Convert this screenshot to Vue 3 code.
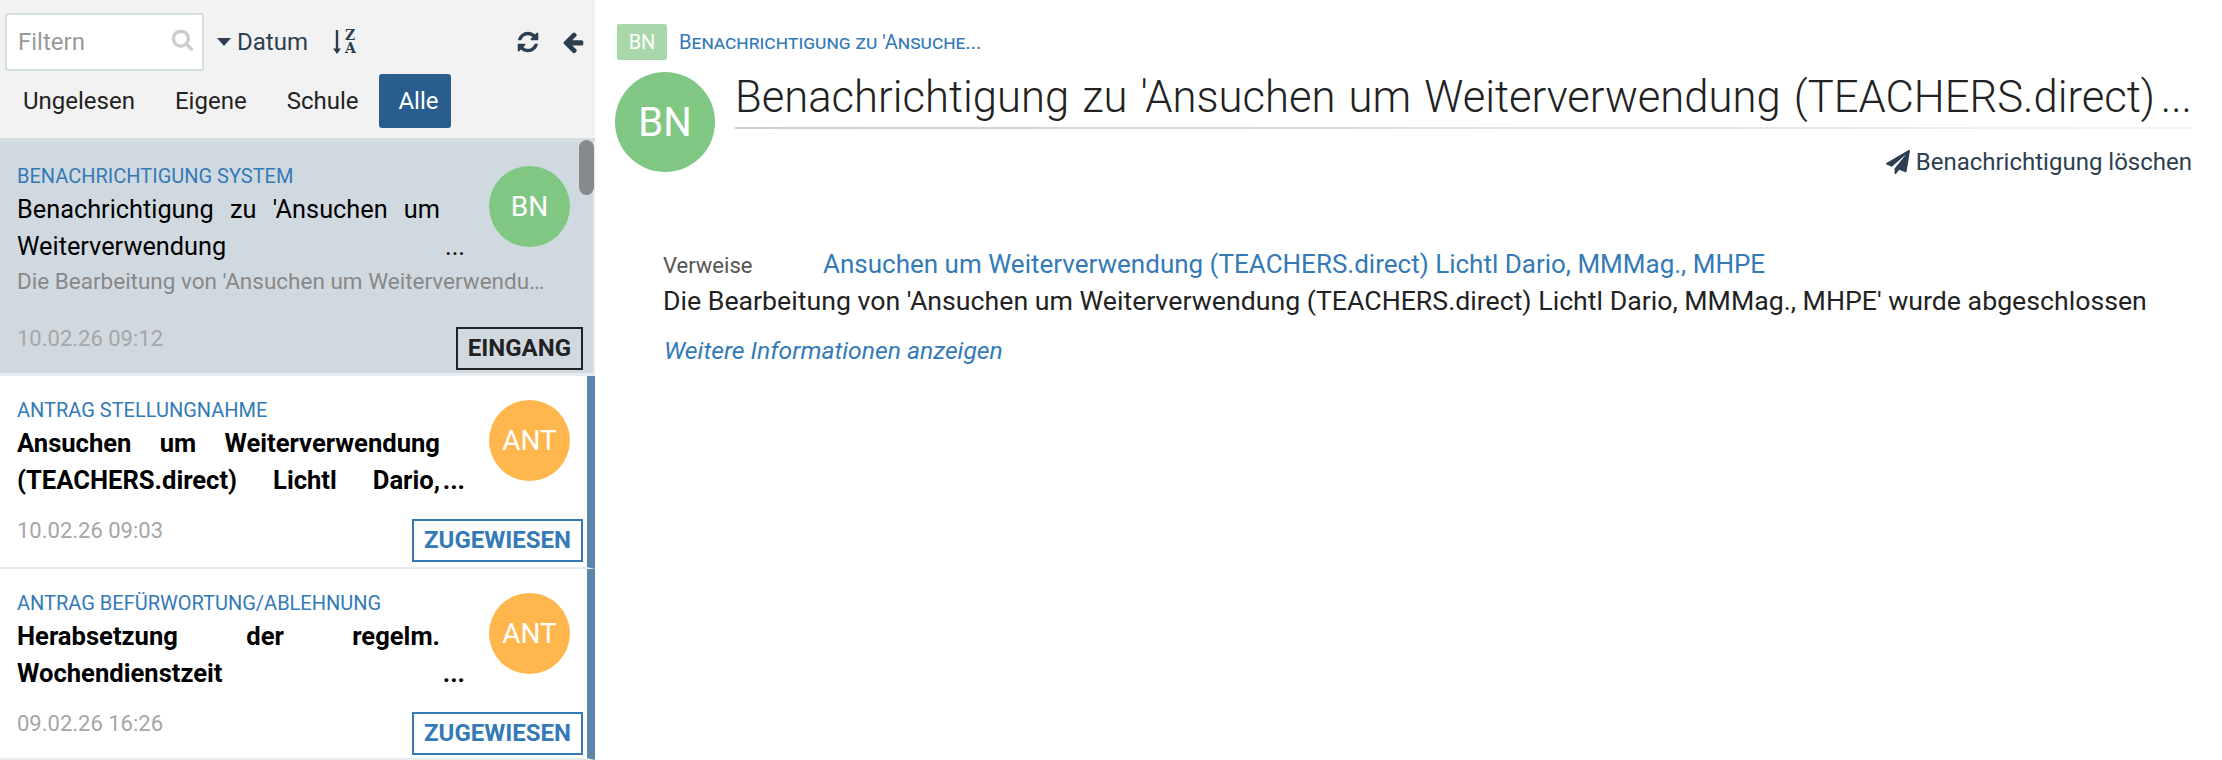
<template>
  <div class="page">
    <aside class="sidebar">
      <div class="toolbar">
        <div class="filter">
          <input class="filter-input" type="text" placeholder="Filtern" />
          <svg class="filter-icon" viewBox="0 0 1792 1792"><path :d="icons.search" /></svg>
        </div>
        <span class="caret"></span>
        <span class="sort-label">Datum</span>
        <div class="sort-icon">
          <svg class="sort-arrow" viewBox="0 0 8 24"><path d="M2.800 0h2.400v18.500h2.800l-4 5.500-4-5.500h2.800z" /></svg>
          <div class="sort-letters"><span>Z</span><span>A</span></div>
        </div>
        <svg class="tool-icon refresh" viewBox="0 0 1792 1792"><path :d="icons.refresh" /></svg>
        <svg class="tool-icon back" viewBox="0 0 1792 1792"><path :d="icons.back" /></svg>
      </div>
      <div class="tabs">
        <button v-for="tab in tabs" :key="tab" class="tab" :class="{ active: tab === 'Alle' }">{{ tab }}</button>
      </div>
      <div class="list">
        <div class="scrollbar"></div>
        <div v-for="item in items" :key="item.date" class="card" :class="{ selected: item.selected, assigned: !item.selected }">
          <div class="card-main">
            <div class="card-text">
              <div class="card-type">{{ item.type }}</div>
              <div class="card-title">{{ item.title }}</div>
              <div v-if="item.preview" class="card-preview">{{ item.preview }}</div>
            </div>
            <div class="avatar" :class="item.color">{{ item.initials }}</div>
          </div>
          <div class="card-foot">
            <span class="card-date">{{ item.date }}</span>
            <span class="card-status">{{ item.status }}</span>
          </div>
        </div>
      </div>
    </aside>

    <main class="detail">
      <div class="crumb">
        <span class="crumb-badge">BN</span>
        <span class="crumb-text">Benachrichtigung zu 'Ansuche...</span>
      </div>
      <div class="head">
        <div class="head-avatar">BN</div>
        <div class="head-main">
          <div class="head-rule">
            <h1 class="head-title">Benachrichtigung zu 'Ansuchen um Weiterverwendung (TEACHERS.direct) Lichtl Dario, MMMag., MHPE'</h1>
          </div>
          <div class="head-actions">
            <svg class="plane" viewBox="0 0 1792 1792"><path :d="icons.plane" /></svg>
            <span>Benachrichtigung löschen</span>
          </div>
        </div>
      </div>
      <div class="content">
        <div class="refs">
          <span class="refs-label">Verweise</span>
          <a class="refs-link">Ansuchen um Weiterverwendung (TEACHERS.direct) Lichtl Dario, MMMag., MHPE</a>
        </div>
        <p class="message">Die Bearbeitung von 'Ansuchen um Weiterverwendung (TEACHERS.direct) Lichtl Dario, MMMag., MHPE' wurde abgeschlossen</p>
        <a class="more">Weitere Informationen anzeigen</a>
      </div>
    </main>
  </div>
</template>

<script setup>
const tabs = ['Ungelesen', 'Eigene', 'Schule', 'Alle'];

const items = [
  {
    type: 'Benachrichtigung System',
    title: "Benachrichtigung zu 'Ansuchen um Weiterverwendung (TEACHERS.direct) Lichtl Dario, MMMag., MHPE'",
    preview: "Die Bearbeitung von 'Ansuchen um Weiterverwendung (TEACHERS.direct) Lichtl Dario, MMMag., MHPE' wurde abgeschlossen",
    date: '10.02.26 09:12',
    status: 'Eingang',
    initials: 'BN',
    color: 'green',
    selected: true
  },
  {
    type: 'Antrag Stellungnahme',
    title: 'Ansuchen um Weiterverwendung (TEACHERS.direct) Lichtl Dario, MMMag., MHPE',
    date: '10.02.26 09:03',
    status: 'Zugewiesen',
    initials: 'ANT',
    color: 'orange'
  },
  {
    type: 'Antrag Befürwortung/Ablehnung',
    title: 'Herabsetzung der regelm. Wochendienstzeit (TEACHERS.direct) Lichtl Dario, MMMag., MHPE',
    date: '09.02.26 16:26',
    status: 'Zugewiesen',
    initials: 'ANT',
    color: 'orange'
  }
];

const icons = {
  search: 'M1216 832q0-185-131.500-316.500t-316.500-131.500-316.500 131.500-131.500 316.500 131.500 316.500 316.500 131.500 316.500-131.500 131.500-316.500zm512 832q0 52-38 90t-90 38q-54 0-90-38l-343-342q-179 124-399 124-143 0-273.500-55.500t-225-150-150-225-55.500-273.500 55.500-273.500 150-225 225-150 273.500-55.500 273.500 55.500 225 150 150 225 55.500 273.500q0 220-124 399l343 343q37 37 37 90z',
  refresh: 'M1639 1056q0 5-1 7-64 268-268 434.500t-478 166.500q-146 0-282.500-55t-243.500-157l-129 129q-19 19-45 19t-45-19-19-45v-448q0-26 19-45t45-19h448q26 0 45 19t19 45-19 45l-137 137q71 66 161 102t187 36q134 0 250-65t186-179q11-17 53-117 8-23 30-23h192q13 0 22.500 9.500t9.500 22.500zm25-800v448q0 26-19 45t-45 19h-448q-26 0-45-19t-19-45 19-45l138-138q-148-137-349-137-134 0-250 65t-186 179q-11 17-53 117-8 23-30 23h-199q-13 0-22.500-9.500t-9.500-22.500v-7q65-268 270-434.500t480-166.500q146 0 284 55.500t245 156.500l130-129q19-19 45-19t45 19 19 45z',
  back: 'M1664 896v128q0 53-32.500 90.500t-84.500 37.500h-704l293 294q38 36 38 90t-38 90l-75 76q-37 37-90 37-52 0-91-37l-651-652q-37-37-37-90 0-52 37-91l651-650q38-38 91-38 52 0 90 38l75 74q38 38 38 91t-38 91l-293 293h704q52 0 84.500 37.500t32.500 90.500z',
  plane: 'M1764 11q33 24 27 64l-256 1536q-5 29-32 45-14 8-31 8-11 0-24-5l-453-185-242 295q-18 23-49 23-13 0-22-4-19-7-30.500-23.500t-11.500-36.500v-349l864-1059-1069 925-395-162q-37-14-40-55-2-40 32-59l1664-960q15-9 32-9 20 0 36 11z'
};
</script>

<style scoped>
.page {
  display: flex;
  width: 2222px;
  height: 760px;
  overflow: hidden;
  font-family: Roboto, "Liberation Sans", sans-serif;
  background: #fff;
}

.sidebar {
  width: 595px;
  height: 760px;
  flex-shrink: 0;
  display: flex;
  flex-direction: column;
  background: #f2f2f2;
}

.toolbar {
  display: flex;
  align-items: center;
  height: 58px;
  margin-top: 13px;
  padding: 0 10px 0 5px;
  color: #2c3e50;
}

.filter {
  position: relative;
  width: 199px;
  height: 58px;
}

.filter-input {
  box-sizing: border-box;
  width: 100%;
  height: 100%;
  padding: 0 40px 0 11px;
  border: 2px solid #d2dde2;
  border-radius: 3px;
  background: #fff;
  font-family: inherit;
  font-size: 24px;
  outline: none;
}

.filter-input::placeholder {
  color: #999;
  opacity: 1;
}

.filter-icon {
  position: absolute;
  right: 10px;
  top: 15px;
  width: 23px;
  height: 23px;
  fill: #ccc;
}

.caret {
  width: 0;
  height: 0;
  margin: 0 6px 0 13px;
  border-left: 7px solid transparent;
  border-right: 7px solid transparent;
  border-top: 8px solid #2c3e50;
}

.sort-label {
  font-size: 24px;
}

.sort-icon {
  display: flex;
  align-items: center;
  margin-left: 25px;
  gap: 4px;
  height: 24px;
  margin-top: -1px;
}

.sort-arrow {
  width: 8px;
  height: 24px;
  fill: #2c3e50;
}

.sort-letters {
  display: flex;
  flex-direction: column;
  font-family: "DejaVu Serif", serif;
  font-size: 14px;
  font-weight: 700;
  line-height: 13px;
}

.tool-icon {
  width: 24px;
  height: 24px;
  fill: #2c3e50;
}

.refresh {
  margin-left: auto;
}

.back {
  margin-left: 21px;
}

.tabs {
  display: flex;
  gap: 2px;
  margin-top: 3px;
  padding: 0 4px 10px;
  border-bottom: 4px solid #d3dde2;
}

.tab {
  height: 54px;
  padding: 0 19px;
  border: 0;
  border-radius: 3px;
  background: transparent;
  color: #222;
  font-family: inherit;
  font-size: 24px;
}

.tab.active {
  padding-right: 12px;
  background: #285d8d;
  color: #fff;
}

.list {
  position: relative;
  flex: 1;
  background: #fff;
}

.scrollbar {
  position: absolute;
  right: 1px;
  top: -2px;
  width: 15px;
  height: 55px;
  border-radius: 8px;
  background: #87898c;
  z-index: 1;
}

.card {
  box-sizing: border-box;
  padding: 20px 0 5px 17px;
  border-bottom: 2px solid #e6ebef;
}

.card.selected {
  height: 234px;
  padding-bottom: 4px;
  padding-right: 10px;
  background: #d1d9e0;
  border-right: 2px solid #e6ebef;
  border-bottom: 3px solid #e6ebef;
}

.card.assigned {
  border-right: 8px solid #5a86ab;
  height: 193px;
  padding-right: 4px;
}

.card.assigned + .card.assigned {
  height: 191px;
}

.card-main {
  display: flex;
  align-items: flex-start;
}

.card-text {
  width: 448px;
  flex-shrink: 0;
}

.card-type {
  height: 29px;
  font-size: 20px;
  line-height: 28px;
  color: #337ab7;
  text-transform: uppercase;
}

.card-title {
  position: relative;
  box-sizing: border-box;
  max-height: 74px;
  padding-right: 25px;
  overflow: hidden;
  font-size: 25.300px;
  line-height: 37px;
  color: #000;
  text-align: justify;
}

.card-title::before {
  content: '...';
  position: absolute;
  right: 0;
  bottom: 0;
}

.assigned .card-title {
  font-size: 25.600px;
  font-weight: 700;
}

.card-preview {
  width: 533px;
  height: 30px;
  margin: 1px 0 31px;
  font-size: 22.500px;
  line-height: 30px;
  color: #888;
  white-space: nowrap;
  overflow: hidden;
  text-overflow: ellipsis;
}

.avatar {
  display: flex;
  align-items: center;
  justify-content: center;
  width: 81px;
  height: 81px;
  margin: 4px 0 0 24px;
  flex-shrink: 0;
  border-radius: 50%;
  color: #fff;
  font-size: 28px;
}

.avatar.green {
  background: #81c784;
}

.avatar.orange {
  background: #ffb74d;
}

.card-foot {
  display: flex;
  align-items: flex-start;
  justify-content: space-between;
  margin-top: 20px;
}

.selected .card-foot {
  margin-top: 0;
}

.card-date {
  font-size: 22px;
  line-height: 24px;
  color: #a6a6a6;
}

.card-status {
  box-sizing: border-box;
  height: 43px;
  padding: 0 10px;
  border: 2px solid #337ab7;
  font-size: 24px;
  font-weight: 700;
  line-height: 39px;
  color: #337ab7;
  text-transform: uppercase;
}

.selected .card-status {
  border-color: #222;
  color: #222;
}

.detail {
  flex: 1;
  min-width: 0;
  padding: 24px 30px 0 20px;
}

.crumb {
  display: flex;
  align-items: center;
  height: 36px;
  padding-left: 2px;
}

.crumb-badge {
  width: 50px;
  height: 36px;
  border-radius: 2px;
  background: #a8d8aa;
  color: #fff;
  font-size: 20px;
  line-height: 36px;
  text-align: center;
}

.crumb-text {
  margin-left: 12px;
  font-size: 20.200px;
  font-variant: small-caps;
  color: #337ab7;
}

.head {
  display: flex;
  gap: 20px;
  margin-top: 12px;
}

.head-avatar {
  display: flex;
  align-items: center;
  justify-content: center;
  width: 100px;
  height: 100px;
  flex-shrink: 0;
  border-radius: 50%;
  background: #81c784;
  color: #fff;
  font-size: 40px;
}

.head-main {
  flex: 1;
  min-width: 0;
}

.head-rule {
  border-bottom: 2px solid;
  border-image: linear-gradient(90deg, #ccc, #f4f4f4) 1;
}

.head-title {
  position: relative;
  box-sizing: border-box;
  height: 52px;
  margin: 0 0 3px;
  padding-right: 37px;
  overflow: hidden;
  font-size: 43.600px;
  font-weight: 300;
  line-height: 52px;
  color: #222;
  text-align: justify;
}

.head-title::before {
  content: '...';
  position: absolute;
  right: 0;
  bottom: 0;
}

.head-actions {
  display: flex;
  align-items: center;
  justify-content: flex-end;
  gap: 6px;
  height: 40px;
  margin-top: 13px;
  font-size: 24px;
  color: #2c3e50;
}

.plane {
  width: 24px;
  height: 24px;
  fill: #2c3e50;
}

.content {
  padding: 67px 0 0 48px;
}

.refs {
  display: flex;
  align-items: center;
  height: 30px;
}

.refs-label {
  width: 160px;
  font-size: 22px;
  color: #555;
  padding-top: 3px;
}

.refs-link {
  font-size: 26px;
  color: #337ab7;
}

.message {
  margin: 7px 0 0;
  font-size: 26.700px;
  line-height: 30px;
  color: #222;
}

.more {
  display: block;
  margin-top: 20px;
  margin-left: 1px;
  font-size: 24.700px;
  line-height: 30px;
  font-style: italic;
  color: #337ab7;
}
</style>
